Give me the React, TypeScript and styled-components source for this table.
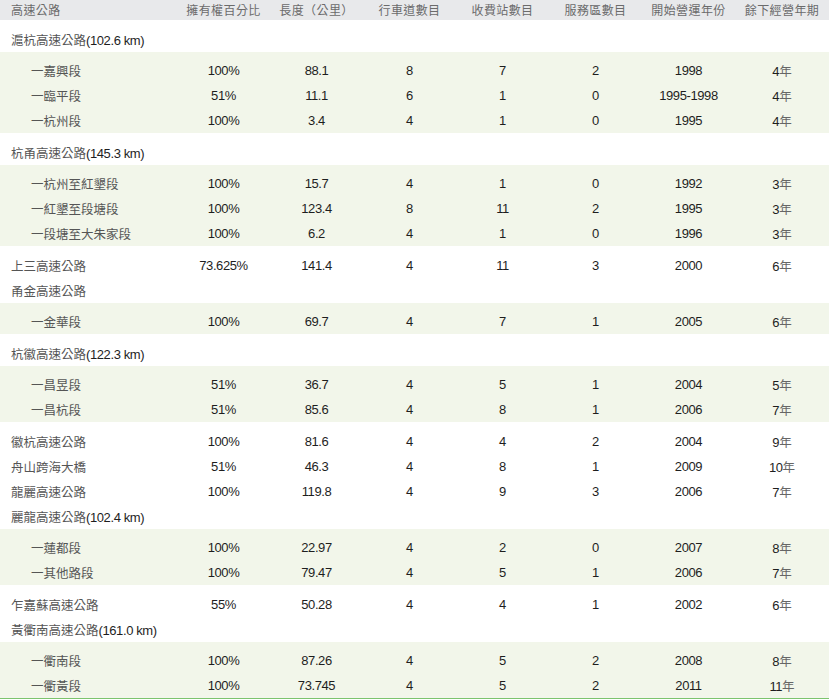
import React from "react";
import styled, {createGlobalStyle} from "styled-components";

type Row = {
    name: string
    km?: string
    sub?: boolean
    values?: string[]
}

type Section = {
    shaded: boolean
    rows: Row[]
}

const HEADERS = ['高速公路', '擁有權百分比', '長度（公里）', '行車道數目', '收費站數目', '服務區數目', '開始營運年份', '餘下經營年期']

const SECTIONS: Section[] = [
    {shaded: false, rows: [{name: '滬杭高速公路', km: '102.6 km'}]},
    {
        shaded: true, rows: [
            {name: '一嘉興段', sub: true, values: ['100%', '88.1', '8', '7', '2', '1998', '4']},
            {name: '一臨平段', sub: true, values: ['51%', '11.1', '6', '1', '0', '1995-1998', '4']},
            {name: '一杭州段', sub: true, values: ['100%', '3.4', '4', '1', '0', '1995', '4']},
        ]
    },
    {shaded: false, rows: [{name: '杭甬高速公路', km: '145.3 km'}]},
    {
        shaded: true, rows: [
            {name: '一杭州至紅墾段', sub: true, values: ['100%', '15.7', '4', '1', '0', '1992', '3']},
            {name: '一紅墾至段塘段', sub: true, values: ['100%', '123.4', '8', '11', '2', '1995', '3']},
            {name: '一段塘至大朱家段', sub: true, values: ['100%', '6.2', '4', '1', '0', '1996', '3']},
        ]
    },
    {
        shaded: false, rows: [
            {name: '上三高速公路', values: ['73.625%', '141.4', '4', '11', '3', '2000', '6']},
            {name: '甬金高速公路'},
        ]
    },
    {
        shaded: true, rows: [
            {name: '一金華段', sub: true, values: ['100%', '69.7', '4', '7', '1', '2005', '6']},
        ]
    },
    {shaded: false, rows: [{name: '杭徽高速公路', km: '122.3 km'}]},
    {
        shaded: true, rows: [
            {name: '一昌昱段', sub: true, values: ['51%', '36.7', '4', '5', '1', '2004', '5']},
            {name: '一昌杭段', sub: true, values: ['51%', '85.6', '4', '8', '1', '2006', '7']},
        ]
    },
    {
        shaded: false, rows: [
            {name: '徽杭高速公路', values: ['100%', '81.6', '4', '4', '2', '2004', '9']},
            {name: '舟山跨海大橋', values: ['51%', '46.3', '4', '8', '1', '2009', '10']},
            {name: '龍麗高速公路', values: ['100%', '119.8', '4', '9', '3', '2006', '7']},
            {name: '麗龍高速公路', km: '102.4 km'},
        ]
    },
    {
        shaded: true, rows: [
            {name: '一蓮都段', sub: true, values: ['100%', '22.97', '4', '2', '0', '2007', '8']},
            {name: '一其他路段', sub: true, values: ['100%', '79.47', '4', '5', '1', '2006', '7']},
        ]
    },
    {
        shaded: false, rows: [
            {name: '乍嘉蘇高速公路', values: ['55%', '50.28', '4', '4', '1', '2002', '6']},
            {name: '黃衢南高速公路', km: '161.0 km'},
        ]
    },
    {
        shaded: true, rows: [
            {name: '一衢南段', sub: true, values: ['100%', '87.26', '4', '5', '2', '2008', '8']},
            {name: '一衢黃段', sub: true, values: ['100%', '73.745', '4', '5', '2', '2011', '11']},
        ]
    },
]

const App = () => {
    return (
        <>
            <GlobalStyle/>
            <Table>
                <HeaderRow>
                    {HEADERS.map((h, i) => <HeaderCell key={h} first={i === 0}>{h}</HeaderCell>)}
                </HeaderRow>
                {SECTIONS.map((section, si) => (
                    <Band key={si} shaded={section.shaded}>
                        {section.rows.map(row => (
                            <BodyRow key={row.name}>
                                <NameCell sub={row.sub}>
                                    <Cjk>{row.name}</Cjk>
                                    {row.km && `(${row.km})`}
                                </NameCell>
                                {row.values && row.values.map((v, i) => (
                                    <Cell key={i}>
                                        {v}{i === 6 && <Unit>年</Unit>}
                                    </Cell>
                                ))}
                            </BodyRow>
                        ))}
                    </Band>
                ))}
            </Table>
        </>
    )
}

export default App;

// Styled Components
const GlobalStyle = createGlobalStyle`
  body {
    margin: 0;
    background: #ffffff;
    font-family: "Liberation Sans", "Noto Sans CJK TC", Arial, sans-serif;
  }
`
const Table = styled.div`
  width: 829px;
  border-bottom: 1px solid #7cc46e;
  font-size: 13px;
  letter-spacing: -0.4px;
  color: #1e1e1e;
`
const COLUMNS = '177px repeat(6, 93px) 1fr'

const HeaderRow = styled.div`
  display: grid;
  grid-template-columns: ${COLUMNS};
  height: 20px;
  align-items: center;
  background: #e8e9eb;
  color: #6b6b6b;
  font-family: "Noto Sans CJK TC", sans-serif;
  font-size: 12px;
  letter-spacing: 0.4px;
`
const HeaderCell = styled.div<{ first?: boolean }>`
  text-align: ${p => p.first ? 'left' : 'center'};
  padding-left: ${p => p.first ? '11px' : '0'};
  line-height: 20px;
`
const Band = styled.div<{ shaded?: boolean }>`
  background: ${p => p.shaded ? '#f2f6ea' : '#ffffff'};
  padding-top: 6.5px;
`
const BodyRow = styled.div`
  display: grid;
  grid-template-columns: ${COLUMNS};
  height: 25px;
  align-items: center;
`
const NameCell = styled.div<{ sub?: boolean }>`
  padding-left: ${p => p.sub ? '31px' : '11px'};
  white-space: nowrap;
`
const Cjk = styled.span`
  font-family: "Noto Sans CJK TC", sans-serif;
  font-size: 12.5px;
  letter-spacing: 0;
  color: #555;
`
const Cell = styled.div`
  text-align: center;
`
const Unit = styled.span`
  font-family: "Noto Sans CJK TC", sans-serif;
  font-size: 12.5px;
  letter-spacing: 0;
  color: #666;
`
